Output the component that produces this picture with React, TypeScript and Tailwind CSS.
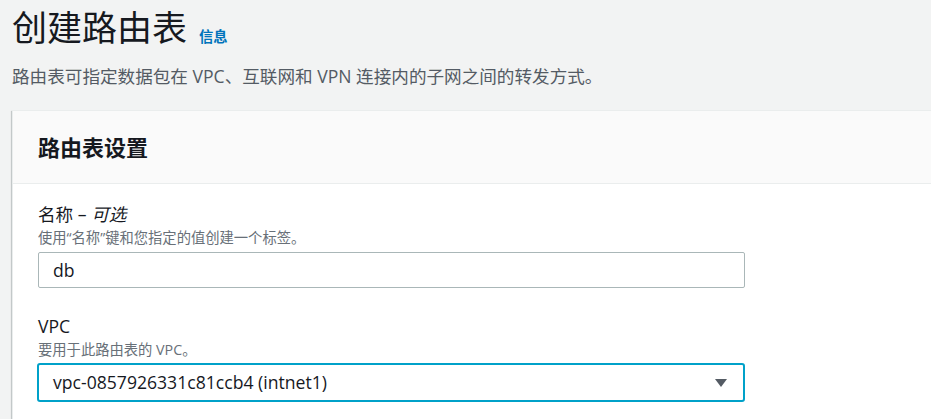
import React from "react";

const font = { fontFamily: '"Open Sans", "Noto Sans CJK SC", sans-serif' };

const Field = ({
  label,
  hint,
  children,
}: {
  label: React.ReactNode;
  hint: string;
  children: React.ReactNode;
}) => (
  <div className="flex flex-col">
    <div className="text-[17.6px] leading-[24px] text-[#16191f]">{label}</div>
    <div className="mt-[2px] text-[14.3px] leading-[20px] text-[#687078]">{hint}</div>
    <div className="mt-[4px]">{children}</div>
  </div>
);

export default function App() {
  return (
    <div className="min-h-screen w-[931px] h-[419px] overflow-hidden bg-[#f2f3f3]" style={font}>
      {/* Page header */}
      <div className="pl-[12px] pt-[6px]">
        <div className="flex items-end gap-[12px]">
          <h1 className="text-[35px] leading-[44px] text-[#16191f] font-normal">创建路由表</h1>
          <a className="mb-[3px] text-[14.3px] font-bold text-[#0073bb]">信息</a>
        </div>
        <p className="mt-[14px] text-[17.6px] leading-[24px] text-[#545b64]">
          路由表可指定数据包在 VPC、互联网和 VPN 连接内的子网之间的转发方式。
        </p>
      </div>

      {/* Settings card */}
      <div className="ml-[12px] mt-[22px] w-[940px] bg-white border-l border-t border-[#eaeded] shadow-[0_1px_1px_0_rgba(0,28,36,0.3),1px_1px_1px_0_rgba(0,28,36,0.15),-1px_1px_1px_0_rgba(0,28,36,0.15)]">
        <div className="h-[73px] flex items-center px-[25px] bg-[#fafafa] border-b border-[#eaeded]">
          <h2 className="text-[22px] font-bold text-[#16191f]">路由表设置</h2>
        </div>
        <div className="px-[25px] pt-[18px] pb-[20px] flex flex-col gap-[26px] w-[757px]">
          <Field
            label={
              <>
                名称 – <i>可选</i>
              </>
            }
            hint="使用“名称”键和您指定的值创建一个标签。"
          >
            <div className="h-[36px] flex items-center px-[14px] border border-[#aab7b8] rounded-[2px] text-[17.6px] text-[#16191f]">
              db
            </div>
          </Field>
          <Field label="VPC" hint="要用于此路由表的 VPC。">
            <div className="h-[39px] -mt-px -ml-px flex items-center justify-between pl-[14px] pr-[15px] border-2 border-[#00a1c9] rounded-[3px] text-[17.6px] text-[#16191f]">
              <span>vpc-0857926331c81ccb4 (intnet1)</span>
              <svg width="14" height="10" viewBox="0 0 14 10">
                <path d="M1 1 L13 1 L7 9 Z" fill="#545b64" />
              </svg>
            </div>
          </Field>
        </div>
      </div>
    </div>
  );
}
